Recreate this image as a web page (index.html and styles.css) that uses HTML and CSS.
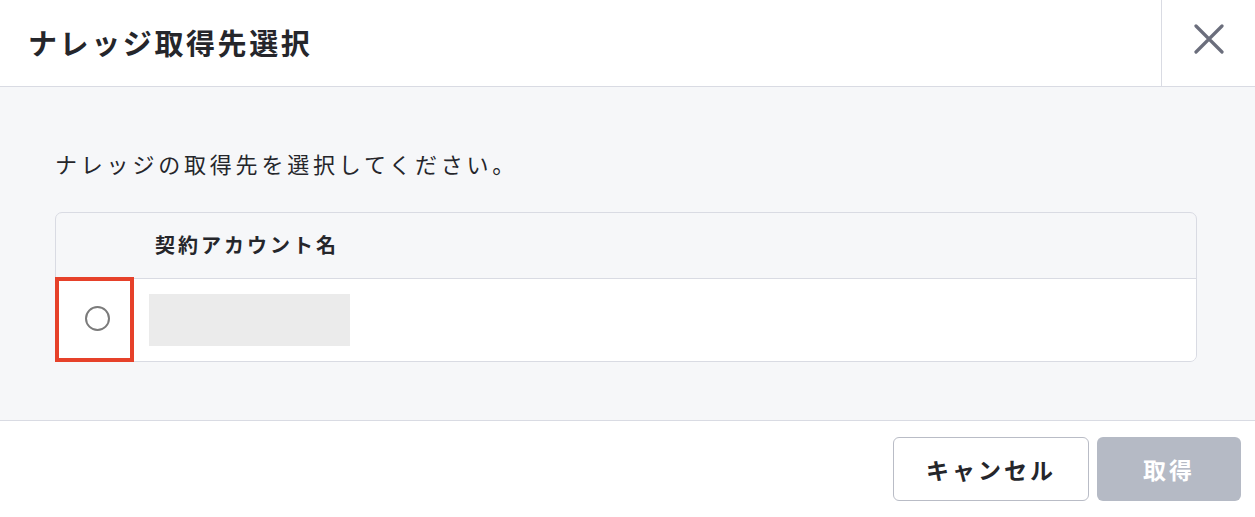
FILE: index.html
```html
<!DOCTYPE html>
<html lang="ja">
<head>
    <meta charset="UTF-8">
    <meta name="viewport" content="width=device-width, initial-scale=1.0">
    <title>ナレッジ取得先選択</title>
    <link rel="stylesheet" href="styles.css">
</head>
<body>
    <div class="modal">
        <header class="modal-header">
            <h1 class="modal-title">ナレッジ取得先選択</h1>
            <button class="close-btn" type="button" aria-label="閉じる">
                <svg width="30" height="30" viewBox="0 0 30 30">
                    <path d="M2 2 L28 28 M28 2 L2 28" stroke="#6b6e7c" stroke-width="3.2" stroke-linecap="round" fill="none"/>
                </svg>
            </button>
        </header>

        <div class="modal-body">
            <p class="lead">ナレッジの取得先を選択してください。</p>

            <div class="account-table">
                <div class="table-head">
                    <div class="col-select"></div>
                    <div class="col-name">契約アカウント名</div>
                </div>
                <div class="table-row">
                    <div class="col-select highlight">
                        <span class="radio"></span>
                    </div>
                    <div class="col-name">
                        <div class="placeholder"></div>
                    </div>
                </div>
            </div>
        </div>

        <footer class="modal-footer">
            <button class="btn btn-cancel" type="button">キャンセル</button>
            <button class="btn btn-primary" type="button" disabled>取得</button>
        </footer>
    </div>
</body>
</html>
```

FILE: styles.css
```css
:root {
    --text: #25262b;
    --border: #d9dbe3;
    --bg-muted: #f6f7f9;
    --highlight: #e6412a;
    --disabled: #b5bac5;
}

* {
    margin: 0;
    padding: 0;
    box-sizing: border-box;
    font-family: "Noto Sans CJK JP", "Noto Sans", sans-serif;
}

body {
    background: #fff;
    color: var(--text);
}

.modal {
    width: 1255px;
    height: 517px;
    display: flex;
    flex-direction: column;
}

.modal-header {
    height: 87px;
    display: flex;
    border-bottom: 1px solid var(--border);
}

.modal-title {
    flex-grow: 1;
    padding-left: 28px;
    display: flex;
    align-items: center;
    font-size: 29px;
    font-weight: 700;
    letter-spacing: 2.6px;
    padding-bottom: 3px;
}

.close-btn {
    width: 94px;
    border: none;
    border-left: 1px solid var(--border);
    background: none;
    display: flex;
    align-items: center;
    justify-content: center;
    padding-bottom: 9px;
    cursor: pointer;
}

.modal-body {
    height: 334px;
    background: var(--bg-muted);
    border-bottom: 1px solid var(--border);
    padding: 56px 58px 0 55px;
}

.lead {
    font-size: 22px;
    letter-spacing: 3.8px;
    line-height: 40px;
    margin-bottom: 29px;
}

.account-table {
    border: 1px solid var(--border);
    border-radius: 7px;
}

.table-head {
    display: flex;
    height: 66px;
    align-items: center;
    border-bottom: 1px solid var(--border);
}

.table-head .col-name {
    font-size: 20px;
    font-weight: 700;
    letter-spacing: 3px;
    padding-left: 22px;
    padding-bottom: 2px;
}

.table-row {
    display: flex;
    height: 82px;
    background: #fff;
    border-radius: 0 0 6px 6px;
}

.col-select {
    width: 77px;
    flex-shrink: 0;
    display: flex;
    align-items: center;
    justify-content: center;
}

.col-select.highlight {
    position: relative;
}

.col-select.highlight::after {
    content: '';
    position: absolute;
    top: -2px;
    left: -1px;
    right: -1px;
    bottom: -1px;
    border: 4px solid var(--highlight);
}

.radio {
    width: 25px;
    height: 25px;
    border: 2px solid #7b7b7b;
    border-radius: 50%;
    margin-left: 6px;
    margin-bottom: 3px;
}

.table-row .col-name {
    display: flex;
    align-items: center;
    padding-left: 16px;
}

.placeholder {
    width: 201px;
    height: 52px;
    background: #ebebeb;
}

.modal-footer {
    flex-grow: 1;
    display: flex;
    justify-content: flex-end;
    align-items: flex-start;
    gap: 8px;
    padding: 16px 14px 0 0;
}

.btn {
    height: 64px;
    border-radius: 6px;
    font-size: 23px;
    font-weight: 700;
    letter-spacing: 3px;
    cursor: pointer;
}

.btn-cancel {
    width: 196px;
    background: #fff;
    color: var(--text);
    border: 1px solid #b9bcc6;
}

.btn-primary {
    width: 144px;
    background: var(--disabled);
    color: #fff;
    border: none;
    cursor: default;
}
```
